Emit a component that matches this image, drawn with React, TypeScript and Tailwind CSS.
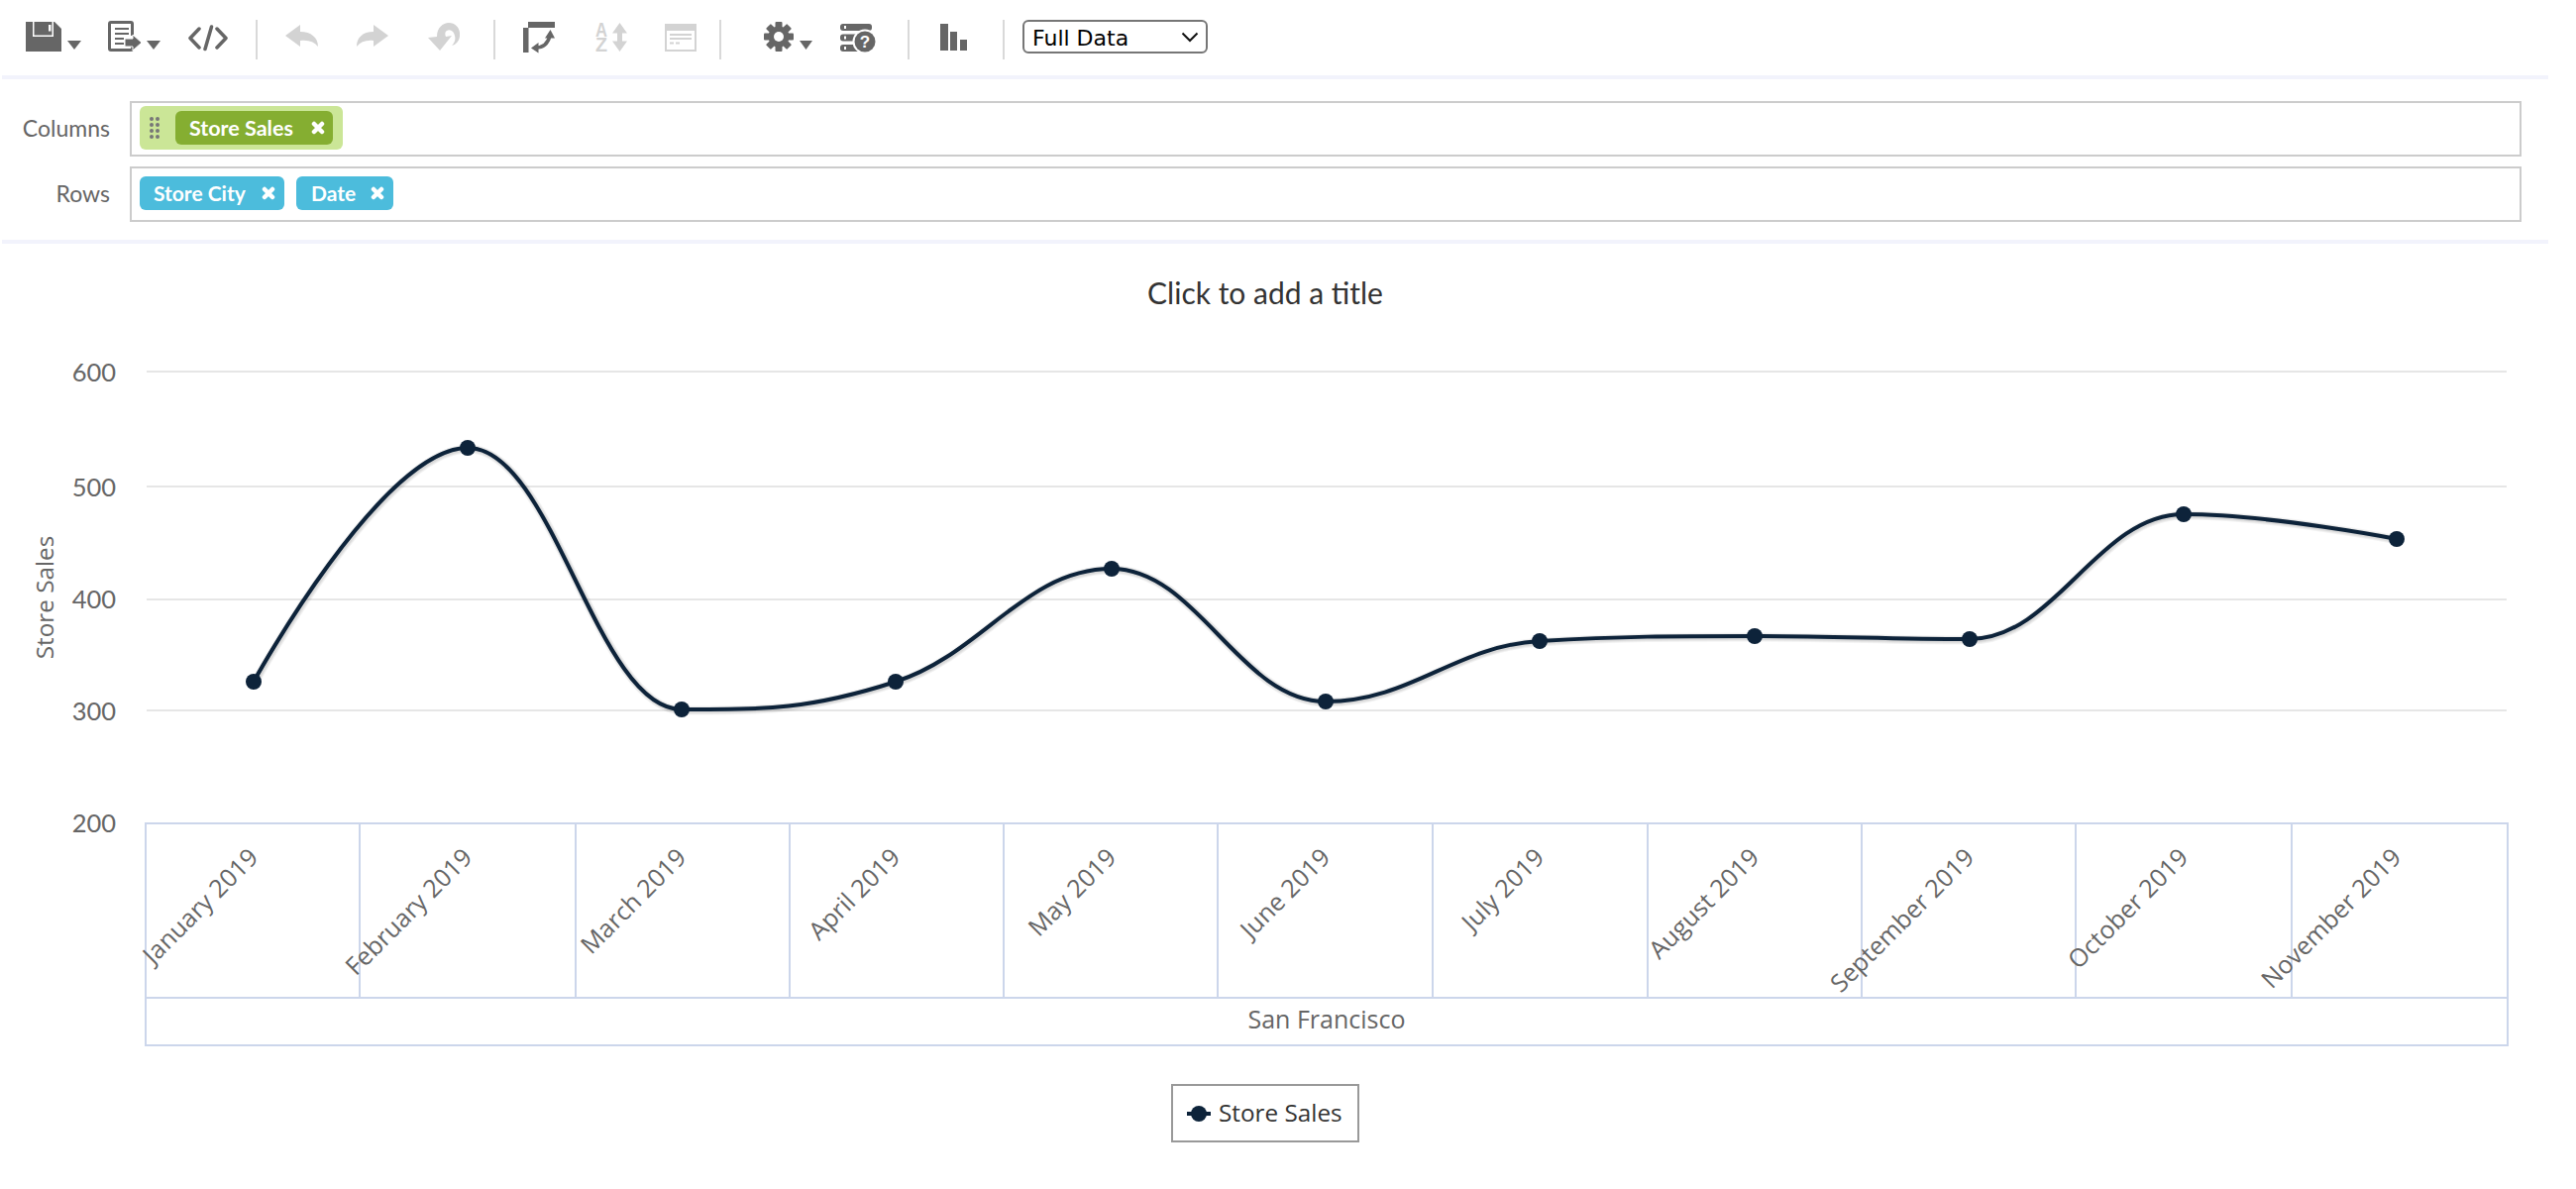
import React from "react";

const pts: [number, number][] = [
  [256, 688], [472, 452], [688, 716], [904, 688], [1122, 574], [1338, 708],
  [1554, 647], [1771, 642], [1988, 645], [2204, 519], [2419, 544],
];
const months = ["January 2019","February 2019","March 2019","April 2019","May 2019","June 2019","July 2019","August 2019","September 2019","October 2019","November 2019"];

function splinePath(p: [number, number][]) {
  const s = 1.5, d = 2.5;
  const L: [number, number][] = [], R: [number, number][] = [];
  p.forEach(([x, y], i) => {
    if (i === 0 || i === p.length - 1) { L.push([x, y]); R.push([x, y]); return; }
    const [lx, ly] = p[i - 1], [nx, ny] = p[i + 1];
    const lcx = (s * x + lx) / d, rcx = (s * x + nx) / d;
    let lcy = (s * y + ly) / d, rcy = (s * y + ny) / d;
    const c = ((rcy - lcy) * (rcx - x)) / (rcx - lcx) + y - rcy;
    lcy += c; rcy += c;
    if (lcy > ly && lcy > y) { lcy = Math.max(ly, y); rcy = 2 * y - lcy; }
    else if (lcy < ly && lcy < y) { lcy = Math.min(ly, y); rcy = 2 * y - lcy; }
    if (rcy > ny && rcy > y) { rcy = Math.max(ny, y); lcy = 2 * y - rcy; }
    else if (rcy < ny && rcy < y) { rcy = Math.min(ny, y); lcy = 2 * y - rcy; }
    L.push([lcx, lcy]); R.push([rcx, rcy]);
  });
  let out = `M${p[0][0]} ${p[0][1]}`;
  for (let i = 1; i < p.length; i++) {
    out += ` C${R[i - 1][0]} ${R[i - 1][1]} ${L[i][0]} ${L[i][1]} ${p[i][0]} ${p[i][1]}`;
  }
  return out;
}

function Icon({ x, w, className, children }: { x: number; w: number; className?: string; children: React.ReactNode }) {
  return (
    <svg width={w} height={40} viewBox={`${x} 20 ${w} 40`} className={`shrink-0 ${className ?? ""}`}>
      {children}
    </svg>
  );
}

const D = "#666666";
const G = "#d3d3d3";

function Caret({ x, w = 14, className }: { x: number; w?: number; className?: string }) {
  return (
    <Icon x={x} w={w} className={className}>
      <path d={`M${x} 41 H${x + w} L${x + w / 2} 50 Z`} fill={D} />
    </Icon>
  );
}

function Sep({ className }: { className: string }) {
  return <div className={`w-[2px] h-[40px] bg-[#d9d9d9] shrink-0 ${className}`} />;
}

function Cross({ className }: { className?: string }) {
  return (
    <svg width={14} height={14} viewBox="0 0 14 14" className={`shrink-0 ${className ?? ""}`}>
      <path d="M3 3 L11 11 M11 3 L3 11" stroke="#fff" strokeWidth={4.5} strokeLinecap="round" />
    </svg>
  );
}

export default function App() {
  const curve = splinePath(pts);
  const axisX = [147, 363, 581, 797, 1013, 1229, 1446, 1663, 1879, 2095, 2313, 2531];
  return (
    <div className="w-[2600px] h-[1200px] bg-white overflow-hidden font-['Lato',sans-serif]">
      {/* toolbar */}
      <div className="h-[76px] pt-[20px] pl-[26px] flex items-start">
        <Icon x={26} w={36}>
          <path d="M26 22 H55 L62 29 V52 H26 Z" fill={D} />
          <rect x={33} y={22} width={21} height={15} fill="#fff" />
          <rect x={34.5} y={22} width={18} height={13.5} fill={D} />
          <rect x={49} y={25} width={2.5} height={6.5} fill="#fff" />
        </Icon>
        <Caret x={68} className="ml-[6px]" />
        <Icon x={109} w={34} className="ml-[27px]">
          <path d="M133.5 36 V24 a1.5 1.5 0 0 0 -1.5 -1.5 H112 a1.5 1.5 0 0 0 -1.5 1.5 V49 a1.5 1.5 0 0 0 1.5 1.5 H132 a1.5 1.5 0 0 0 1.5 -1.5 V47" fill="none" stroke={D} strokeWidth={3} />
          <path d="M116 28 H130 V30 H116 Z M116 33 H130 V35 H116 Z M116 38 H125 V40 H116 Z M116 43 H125 V45 H116 Z" fill={D} />
          <path d="M126 39 H134 V35 L143 43 L134 51 V47 H126 Z" fill={D} stroke="#fff" strokeWidth={1} />
        </Icon>
        <Caret x={148} className="ml-[5px]" />
        <Icon x={190} w={40} className="ml-[28px]">
          <path d="M201 29 L192 38.5 L201 48 M219 29 L228 38.5 L219 48 M213.5 27 L207 49.5" fill="none" stroke={D} strokeWidth={3.5} strokeLinecap="round" strokeLinejoin="round" />
        </Icon>
        <Sep className="ml-[28px]" />
        <Icon x={288} w={33} className="ml-[28px]">
          <path d="M288 36 L303 25 V32 C314 32 321 38 321 47 C317 42 311 40 303 41 V47 Z" fill={G} />
        </Icon>
        <Icon x={360} w={32} className="ml-[39px]">
          <path d="M392 36 L377 25 V32 C366 32 360 38 360 47 C364 42 370 40 377 41 V47 Z" fill={G} />
        </Icon>
        <Icon x={432} w={32} className="ml-[40px]">
          <path d="M432 38 L441 37 C441 28 447 23 453 23 C461 23 465 30 464 37 C463 42 460 45 456 46 C459 43 460 40 459 36 C458 31 454 29 451 31 C449 32 449 35 450 37 L456 36 L444 51 Z" fill={G} />
        </Icon>
        <Sep className="ml-[34px]" />
        <Icon x={528} w={32} className="ml-[28px]">
          <path d="M533 22 H560 V28 H533 Z M528 28 H533.5 V53 H528 Z" fill={D} />
          <path d="M541 48 C549 48 553 44 555 36" fill="none" stroke={D} strokeWidth={3.5} />
          <path d="M555.5 30 L550 38.5 H560 Z M536 48.5 L543.5 43 V53.5 Z" fill={D} />
        </Icon>
        <Icon x={601} w={32} className="ml-[41px]">
          <text x={601} y={37} textLength={12} lengthAdjust="spacingAndGlyphs" fontSize={20} fontWeight={700} fill={G} fontFamily="Liberation Sans, sans-serif">A</text>
          <text x={601} y={52} textLength={12} lengthAdjust="spacingAndGlyphs" fontSize={20} fontWeight={700} fill={G} fontFamily="Liberation Sans, sans-serif">Z</text>
          <path d="M625.5 23 L618 33.5 H623 V41.5 H618 L625.5 52 L633 41.5 H628 V33.5 H633 Z" fill={G} />
        </Icon>
        <Icon x={671} w={32} className="ml-[38px]">
          <rect x={672} y={25} width={30} height={26} fill="#fff" stroke={G} strokeWidth={2} />
          <rect x={671} y={24} width={32} height={7} fill={G} />
          <path d="M676 34 H698 V36 H676 Z M676 38 H698 V40 H676 Z M676 42.5 H680 V44.5 H676 Z M682 42.5 H686 V44.5 H682 Z" fill={G} />
        </Icon>
        <Sep className="ml-[23px]" />
        <Icon x={771} w={30} className="ml-[43px]">
          {[0, 45, 90, 135, 180, 225, 270, 315].map((a) => (
            <rect key={a} x={782.5} y={22} width={7} height={8} rx={1} fill={D} transform={`rotate(${a} 786 37)`} />
          ))}
          <circle cx={786} cy={37} r={10.5} fill={D} />
          <circle cx={786} cy={37} r={5} fill="#fff" />
        </Icon>
        <Caret x={807} w={13} className="ml-[6px]" />
        <Icon x={848} w={36} className="ml-[28px]">
          <rect x={848} y={24} width={32} height={7} rx={3} fill={D} />
          <rect x={848} y={34.5} width={20} height={7} rx={3} fill={D} />
          <rect x={848} y={45} width={20} height={7} rx={3} fill={D} />
          <path d="M852 26 H854 V29 H852 Z M852 36.5 H854 V39.5 H852 Z M852 47 H854 V50 H852 Z" fill="#fff" />
          <circle cx={873} cy={42} r={12.5} fill="#fff" />
          <circle cx={873} cy={42} r={10.5} fill={D} />
          <text x={873} y={48} textAnchor="middle" fontSize={17} fontWeight={700} fill="#fff" fontFamily="Liberation Sans, sans-serif">?</text>
        </Icon>
        <Sep className="ml-[32px]" />
        <Icon x={949} w={27} className="ml-[31px]">
          <path d="M949 24 H957 V51 H949 Z M959 32 H966 V51 H959 Z M969 40 H976 V51 H969 Z" fill={D} />
        </Icon>
        <Sep className="ml-[36px]" />
        <div className="relative ml-[18px] w-[187px] h-[34px]">
          <select
            defaultValue="Full Data"
            className="w-full h-full border-2 border-[#767676] rounded-[6px] pl-[8px] text-[22px] text-black bg-white font-['DejaVu_Sans',sans-serif] appearance-none"
          >
            <option>Full Data</option>
          </select>
          <svg width={18} height={11} viewBox="0 0 18 11" className="absolute left-[160px] top-[12px] pointer-events-none">
            <path d="M1.5 1.5 L9 9 L16.5 1.5" fill="none" stroke="#111" strokeWidth={2} />
          </svg>
        </div>
      </div>
      <div className="h-[4px] w-[2570px] ml-[2px] bg-[#f2f3fc]" />

      {/* shelves */}
      <div className="pt-[22px]">
        <div className="flex items-center h-[56px]">
          <div className="w-[111px] text-right text-[23px] leading-[28px] pb-[2px] text-[#666]">Columns</div>
          <div className="ml-[20px] w-[2414px] h-[56px] border-2 border-[#cccccc] pl-[8px] pt-[3px]">
            <div className="w-[205px] h-[44px] bg-[#cbe697] rounded-[6px] flex items-center pl-[10px]">
              <div className="grid grid-cols-2 gap-x-[2px] gap-y-[2px] w-[10px]">
                {[0, 1, 2, 3, 4, 5, 6, 7].map((i) => (
                  <div key={i} className="w-[4px] h-[4px] rounded-full bg-[#777]" />
                ))}
              </div>
              <div className="ml-[16px] w-[159px] h-[34px] bg-[#85ae31] rounded-[6px] flex items-center pl-[14px] text-[21.5px] font-bold text-white">
                <span className="w-[123px]">Store Sales</span>
                <Cross />
              </div>
            </div>
          </div>
        </div>
        <div className="flex items-center h-[56px] mt-[10px]">
          <div className="w-[111px] text-right text-[23px] leading-[28px] pb-[2px] text-[#666]">Rows</div>
          <div className="ml-[20px] w-[2414px] h-[56px] border-2 border-[#cccccc] pl-[8px] pt-[8px] flex items-start">
            <div className="w-[146px] h-[34px] bg-[#4cbcdc] rounded-[6px] flex items-center pl-[14px] text-[21px] font-bold text-white">
              <span className="w-[109px]">Store City</span>
              <Cross />
            </div>
            <div className="ml-[12px] w-[98px] h-[34px] bg-[#4cbcdc] rounded-[6px] flex items-center pl-[15px] text-[21px] font-bold text-white">
              <span className="w-[60px]">Date</span>
              <Cross />
            </div>
          </div>
        </div>
      </div>
      <div className="mt-[18px] h-[4px] w-[2570px] ml-[2px] bg-[#f2f3fc]" />

      {/* chart */}
      <div className="w-[2554px] h-[98px] flex items-center justify-center text-[30px] text-[#333]">Click to add a title</div>
      <svg width={2600} height={726} viewBox="0 344 2600 726" className="block">
        {[375, 491, 605, 717].map((y) => (
          <line key={y} x1={148} x2={2530} y1={y} y2={y} stroke="#e6e6e6" strokeWidth={2} />
        ))}
        {[["600", 385], ["500", 501], ["400", 614], ["300", 727], ["200", 840]].map(([t, y]) => (
          <text key={t as string} x={117} y={y as number} textAnchor="end" fontSize={25.5} fill="#666" fontFamily="Lato, sans-serif">{t}</text>
        ))}
        <text transform="translate(54 603) rotate(-90)" textAnchor="middle" fontSize={24.3} fill="#666" fontFamily="Open Sans, sans-serif">Store Sales</text>

        <g fill="none" stroke="#ccd6eb" strokeWidth={2}>
          <path d="M147 831 H2531 V1055 H147 Z M147 1007 H2531" />
          {axisX.slice(1, -1).map((x) => (
            <line key={x} x1={x} x2={x} y1={831} y2={1007} />
          ))}
        </g>
        {months.map((m, i) => (
          <text key={m} transform={`translate(${pts[i][0] + 6} 867) rotate(-45)`} textAnchor="end" fontSize={25} fill="#666" fontFamily="Open Sans, sans-serif">{m}</text>
        ))}
        <text x={1339} y={1038} textAnchor="middle" fontSize={25} fill="#666" fontFamily="Open Sans, sans-serif">San Francisco</text>

        <g fill="none" transform="translate(1 1)" stroke="#000" strokeOpacity={0.05}>
          <path d={curve} strokeWidth={9} />
          <path d={curve} strokeWidth={7} />
          <path d={curve} strokeWidth={5} />
        </g>
        <path d={curve} fill="none" stroke="#0d233a" strokeWidth={4} />
        {pts.map(([x, y]) => (
          <circle key={x} cx={x} cy={y} r={8} fill="#0d233a" />
        ))}
      </svg>
      <div className="w-[2554px] flex justify-center mt-[24px]">
        <div className="w-[190px] h-[59px] border-2 border-[#999999] flex items-center pl-[14px] text-[24.3px] text-[#333] font-['Open_Sans',sans-serif]">
          <svg width={24} height={16} viewBox="0 0 24 16" className="shrink-0">
            <line x1={0} x2={24} y1={8} y2={8} stroke="#0d233a" strokeWidth={4} />
            <circle cx={12} cy={8} r={8} fill="#0d233a" />
          </svg>
          <span className="ml-[8px]">Store Sales</span>
        </div>
      </div>
    </div>
  );
}
